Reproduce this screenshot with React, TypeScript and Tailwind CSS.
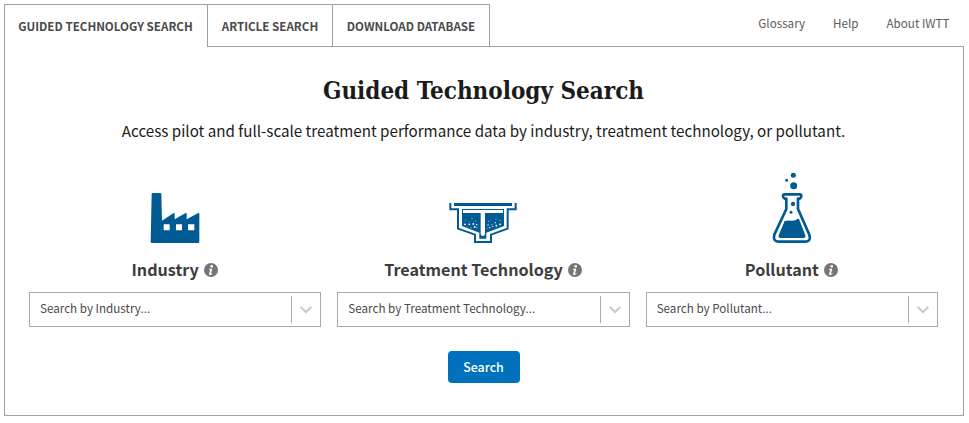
import type { ReactNode } from "react";

const SANS = "font-['Noto_Sans_CJK_SC','Noto_Sans',sans-serif]";

function FactoryIcon() {
  return (
    <svg className="mr-px mb-[6px] h-[52px] w-[50px]" viewBox="31 36 150 156" fill="#005a94">
      <path
        fillRule="evenodd"
        d="M36 42q0-3 3-3h22q4 0 4 4l2 79 35-23q2-1 3 2v17l33-19q3-1 3 2v17l35-19q3-1 3 2v84q0 4-4 4H37q-4 0-4-4zM72 133v18h18v-18zM109 133v18h18v-18zM145 133v18h19v-18z"
      />
    </svg>
  );
}

function ClarifierIcon() {
  const dots = [
    [76, 90, 1.3], [96, 86, 1.5], [107, 92, 1.4], [87, 94, 1.2],
    [75, 103, 2.7], [88, 103, 2.7], [100, 102, 2.7], [110, 104, 2.3],
    [81, 111, 1.4], [93, 113, 1.6], [104, 111, 2.7], [111, 113, 1.5],
    [145, 94, 1.5], [153, 90, 1.4], [168, 87, 1.5], [180, 91, 1.6],
    [144, 105, 2.1], [156, 103, 1.5], [166, 98, 2], [169, 107, 2.7],
    [180, 103, 2.7], [149, 113, 2.1], [158, 109, 2], [141, 115, 1.4],
  ];
  return (
    <svg className="ml-[3px] h-[60px] w-[90px]" viewBox="0 0 270 180">
      <path d="M42 39h174v9H42z" fill="#005a94" />
      <path
        d="M31 39v19h23v58l51 18v22h48v-22l50-18V58h24V39"
        fill="none"
        stroke="#005a94"
        strokeWidth="6"
      />
      <path d="M66 57h126v51l-53 20v18h-21v-18l-52-20z" fill="#005a94" />
      <path d="M69 60h120v9H69zM122 68h13v64q0 6-6.500 6t-6.500-6z" fill="#fff" />
      {dots.map(([x, y, r]) => (
        <circle key={`${x}-${y}`} cx={x} cy={y} r={r} fill="#fff" />
      ))}
    </svg>
  );
}

function FlaskIcon() {
  return (
    <svg className="ml-[7px] h-[85px] w-[70px]" viewBox="0 0 210 255" fill="#005a94">
      <circle cx="100" cy="31" r="7.5" />
      <circle cx="80" cy="46" r="4.5" />
      <circle cx="101" cy="62" r="10.5" />
      <path
        d="M74 88h45q5 0 5 5 0 6-5 8h-5v31l34 77q6 21-12 21H56q-18 0-13-21l36-77v-31h-5q-5-2-5-8 0-5 5-5z"
        fill="none"
        stroke="#005a94"
        strokeWidth="8"
        strokeLinejoin="round"
      />
      <circle cx="99" cy="117" r="6.5" />
      <circle cx="93" cy="142" r="4.5" />
      <path d="M74 168q10-3 19-1 14 1 20-6l4 1 19 49q2 8-6 8H62q-8 0-6-8z" />
    </svg>
  );
}

function InfoIcon() {
  return (
    <svg className="size-[14px] shrink-0" viewBox="0 0 42 42" fill="#757575">
      <circle cx="21" cy="21" r="21" />
      <circle cx="23" cy="10" r="4" fill="#fff" />
      <path d="M15 17h10l-4 14q0 2 4 0v3q-9 4-10-1l4-13h-4z" fill="#fff" />
    </svg>
  );
}

function Tab({ children, className }: { children: ReactNode; className: string }) {
  return (
    <button className={`h-full shrink-0 border-t border-r border-[#a0a0a1] text-center whitespace-nowrap ${className}`}>
      {children}
    </button>
  );
}

function SearchColumn({ icon, title }: { icon: ReactNode; title: string }) {
  return (
    <div className="flex min-w-0 flex-col items-center">
      <div className="flex h-[85px] items-end">{icon}</div>
      <div className="mt-[7px] mr-px flex h-[26px] items-center gap-[5px]">
        <h2 className="pb-[2px] text-[16.15px] leading-[26px] font-bold whitespace-nowrap text-[#3d3d3d]">{title}</h2>
        <InfoIcon />
      </div>
      <div className="mt-[9px] flex h-[35px] w-full items-center border border-[#a9a9a9]">
        <span className="grow pb-[3px] pl-[10px] text-[11.65px] leading-[18px] whitespace-nowrap text-[#4a4a4a]">
          Search by {title}...
        </span>
        <span className="h-[27px] w-px bg-[#a9a9a9]" />
        <span className="flex w-[28px] justify-center pt-px">
          <svg className="h-[8px] w-[12px]" viewBox="0 0 12 8" fill="none" stroke="#ccc" strokeWidth="2.2" strokeLinecap="round">
            <path d="M1.3 1.5 6 6.1l4.700-4.600" />
          </svg>
        </span>
      </div>
    </div>
  );
}

export default function App() {
  return (
    <div className={`h-[423px] w-[969px] overflow-hidden bg-white pt-1 pl-1 ${SANS}`}>
      <header className="flex h-[43px] w-[960px]">
        <nav className="flex h-full text-[11.6px] font-bold text-[#4a4a4a]">
          <Tab className="w-[204px] border-l pt-px pr-px">GUIDED TECHNOLOGY SEARCH</Tab>
          <Tab className="w-[125px] border-b pt-[2px]">ARTICLE SEARCH</Tab>
          <Tab className="w-[157px] border-b pt-[2px]">DOWNLOAD DATABASE</Tab>
        </nav>
        <div className="flex grow justify-end gap-7 border-b border-[#a0a0a1] pt-[9px] pr-[14.5px] text-[11.65px] leading-[19px] text-[#5b5b5b]">
          <a>Glossary</a>
          <a>Help</a>
          <a>About IWTT</a>
        </div>
      </header>
      <main className="flex h-[369px] w-[960px] flex-col items-center border-x border-b border-[#a0a0a1] pr-[25px] pl-6">
        <h1 className="mt-[26px] font-['DejaVu_Serif_Condensed','DejaVu_Serif',serif] text-[24px] leading-[36px] font-bold whitespace-nowrap text-[#1b1b1b]">
          Guided Technology Search
        </h1>
        <p className="mt-[8px] text-[15.18px] leading-[26px] whitespace-nowrap text-[#1b1b1b]">
          Access pilot and full-scale treatment performance data by industry, treatment technology, or pollutant.
        </p>
        <div className="mt-[22px] grid w-full grid-cols-3 gap-4">
          <SearchColumn icon={<FactoryIcon />} title="Industry" />
          <SearchColumn icon={<ClarifierIcon />} title="Treatment Technology" />
          <SearchColumn icon={<FlaskIcon />} title="Pollutant" />
        </div>
        <button className="mt-6 h-8 w-[72px] rounded-[4px] bg-[#0071bc] text-[12.4px] leading-[20px] font-medium text-white">
          Search
        </button>
      </main>
    </div>
  );
}
